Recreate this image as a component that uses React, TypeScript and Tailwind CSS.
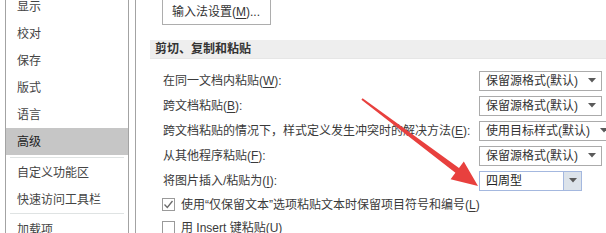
import React from "react";

const Key = ({ pre, k, post }: { pre: string; k: string; post: string }) => (
  <span>
    {pre}
    <span className="underline underline-offset-2">{k}</span>
    {post}
  </span>
);

const Arrow = () => (
  <svg width="8" height="5" viewBox="0 0 8 5" className="shrink-0">
    <path d="M0 0 L8 0 L4 4.5 Z" fill="#5a5a5a" />
  </svg>
);

const Drop = ({ text, w }: { text: string; w: string }) => (
  <div className={`${w} h-[20px] border border-[#ababab] bg-white flex items-center pl-[6px] pr-[5px] justify-between shrink-0`}>
    <span className="text-[#333] whitespace-nowrap">{text}</span>
    <Arrow />
  </div>
);

const Row = ({ label, children }: { label: React.ReactNode; children: React.ReactNode }) => (
  <div className="h-[25px] flex items-center justify-between pl-[27px]">
    <div className="whitespace-nowrap text-[#3a3a3a]">{label}</div>
    <div className="w-[127px] shrink-0 flex">{children}</div>
  </div>
);

const Check = ({ checked }: { checked?: boolean }) => (
  <div className="w-[13px] h-[13px] border border-[#9a9a9a] bg-white flex items-center justify-center shrink-0">
    {checked && (
      <svg width="11" height="11" viewBox="0 0 11 11">
        <path d="M1.5 5.5 L4.3 8.5 L9.5 2" stroke="#6a6a6a" strokeWidth="1.3" fill="none" />
      </svg>
    )}
  </div>
);

const navItems = ["显示", "校对", "保存", "版式", "语言"];

export default function App() {
  return (
    <div className="w-[606px] h-[233px] overflow-hidden bg-white relative flex text-[12px] font-['Liberation_Sans','Noto_Sans_CJK_SC',sans-serif] text-[#3a3a3a]">
      {/* left nav */}
      <div className="ml-[5px] w-[124px] h-full border-l border-r border-[#a3a3a3] shrink-0">
        <div className="-mt-[7px] flex flex-col">
          {navItems.map((t) => (
            <div key={t} className="h-[27px] flex items-center pl-[11px] text-[#444]">
              {t}
            </div>
          ))}
          <div className="h-[27px] flex items-center pl-[11px] bg-[#c6c6c6] text-[#222]">高级</div>
          <div className="mt-[2px] mb-[1px] mx-[4px] h-px bg-[#dfe3e3]" />
          <div className="h-[27px] flex items-center pl-[11px] text-[#444]">自定义功能区</div>
          <div className="h-[27px] flex items-center pl-[11px] text-[#444]">快速访问工具栏</div>
          <div className="mb-[2px] mx-[4px] h-px bg-[#dfe3e3]" />
          <div className="h-[27px] flex items-center pl-[11px] text-[#444]">加载项</div>
        </div>
      </div>
      {/* main */}
      <div className="ml-[6px] flex-1 h-full border-l border-[#a3a3a3] flex flex-col min-w-0">
        <div className="-mt-[2px] pl-[26px]">
          <div className="w-[109px] h-[27px] border border-[#adadad] bg-white flex items-center pl-[9px] text-[#333]">
            <Key pre="输入法设置(" k="M" post=")..." />
          </div>
        </div>
        <div className="mt-[15px] ml-[14px] h-[23px] bg-[#eeeeee] border-b border-[#e6e6e6] flex items-center pl-[5px] font-bold text-[#333]">
          剪切、复制和粘贴
        </div>
        <div className="mt-[9px] flex flex-col">
          <Row label={<Key pre="在同一文档内粘贴(" k="W" post="):" />}>
            <Drop text="保留源格式(默认)" w="w-[123px]" />
          </Row>
          <Row label={<Key pre="跨文档粘贴(" k="B" post="):" />}>
            <Drop text="保留源格式(默认)" w="w-[123px]" />
          </Row>
          <Row label={<Key pre="跨文档粘贴的情况下，样式定义发生冲突时的解决方法(" k="E" post="):" />}>
            <Drop text="使用目标样式(默认)" w="w-[135px]" />
          </Row>
          <Row label={<Key pre="从其他程序粘贴(" k="F" post="):" />}>
            <Drop text="保留源格式(默认)" w="w-[123px]" />
          </Row>
          <Row label={<Key pre="将图片插入/粘贴为(" k="I" post="):" />}>
            <div className="w-[103px] h-[20px] border border-[#a4b8df] bg-white flex items-stretch">
              <div className="flex-1 flex items-center pl-[6px] text-[#222]">四周型</div>
              <div className="w-[18px] border-l border-[#a4b8df] bg-[#dce3ea] flex items-center justify-center">
                <Arrow />
              </div>
            </div>
          </Row>
          <div className="h-[23px] flex items-center pl-[26px] gap-[6px]">
            <Check checked />
            <span className="whitespace-nowrap">
              <Key pre="使用“仅保留文本”选项粘贴文本时保留项目符号和编号(" k="L" post=")" />
            </span>
          </div>
          <div className="h-[23px] flex items-center pl-[26px] gap-[6px]">
            <Check />
            <span className="whitespace-nowrap">
              <Key pre="用 Insert 键粘贴(" k="U" post=")" />
            </span>
          </div>
        </div>
      </div>
      {/* red annotation arrow */}
      <svg className="absolute left-0 top-0 pointer-events-none" width="606" height="233" viewBox="0 0 606 233">
        <polygon
          points="361.4,99.8 362.6,98.2 459,168 463.8,161.6 478,186 450.6,179.2 455.4,172.8"
          fill="#e8403e"
        />
      </svg>
    </div>
  );
}
